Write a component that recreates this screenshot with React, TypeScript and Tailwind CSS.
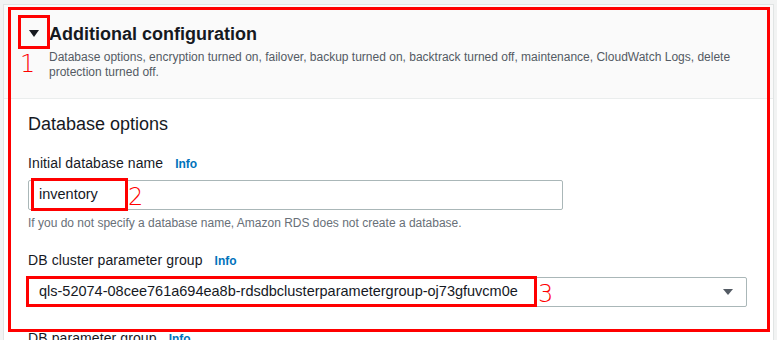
const font = { fontFamily: '"Liberation Sans", Arial, sans-serif' };

const Mark = ({ n, className }: { n: string; className: string }) => (
  <span
    className={`absolute text-[24px] leading-none font-extralight text-[#ff0000] ${className}`}
    style={{ fontFamily: '"DejaVu Sans", sans-serif' }}
  >
    {n}
  </span>
);

const Label = ({ text }: { text: string }) => (
  <div className="flex items-baseline gap-[12px]">
    <span className="text-[14px] leading-[20px] tracking-[0.1px] text-[#16191f]">{text}</span>
    <span className="text-[12px] font-bold text-[#0073bb]">Info</span>
  </div>
);

export default function App() {
  return (
    <div className="w-[777px] h-[340px] overflow-hidden bg-[#f2f3f3] pt-[4px] pl-[3px]" style={font}>
      <div className="relative w-[771px] h-[400px] bg-white border border-[#e1e4e4]">
        {/* header */}
        <div className="h-[94px] bg-[#fafafa] border-b border-[#eaeded] pt-[18px] pl-[25px]">
          <div className="flex items-center gap-[10px]">
            <svg width="10" height="7" viewBox="0 0 10 7" className="mt-[-1px]">
              <path d="M0 0 L10 0 L5 7 Z" fill="#16191f" />
            </svg>
            <h2 className="text-[18px] leading-[22px] font-bold text-[#16191f]">Additional configuration</h2>
          </div>
          <p className="mt-[5px] ml-[20px] w-[704px] text-[12px] leading-[15px] text-[#545b64]">
            Database options, encryption turned on, failover, backup turned on, backtrack turned off, maintenance,
            CloudWatch Logs, delete protection turned off.
          </p>
        </div>

        {/* body */}
        <div className="pl-[24px] pt-[14px]">
          <h3 className="text-[18px] leading-[22px] text-[#16191f]">Database options</h3>

          <div className="mt-[18px]">
            <Label text="Initial database name" />
          </div>
          <div className="mt-[7px] w-[535px] h-[30px] border border-[#aab7b8] rounded-[2px] flex items-center pl-[10px] text-[14.5px] text-[#16191f]">
            inventory
          </div>
          <p className="mt-[5px] text-[12px] leading-[16px] text-[#687078]">
            If you do not specify a database name, Amazon RDS does not create a database.
          </p>

          <div className="mt-[19px]">
            <Label text="DB cluster parameter group" />
          </div>
          <div className="mt-[7px] w-[719px] h-[30px] border border-[#aab7b8] rounded-[2px] flex items-center justify-between pl-[10px] pr-[13px] text-[14.5px] text-[#16191f]">
            <span>qls-52074-08cee761a694ea8b-rdsdbclusterparametergroup-oj73gfuvcm0e</span>
            <svg width="10" height="6" viewBox="0 0 10 6">
              <path d="M0 0 L10 0 L5 6 Z" fill="#545b64" />
            </svg>
          </div>

          <div className="mt-[21px]">
            <Label text="DB parameter group" />
          </div>
        </div>

        {/* annotations */}
        <div className="absolute left-[4px] top-[2px] w-[762px] h-[325px] border-[3px] border-[#ff0000]" />
        <div className="absolute left-[14px] top-[10px] w-[32px] h-[34px] border-[3px] border-[#ff0000]" />
        <Mark n="1" className="left-[16px] top-[47px]" />
        <div className="absolute left-[27px] top-[173px] w-[97px] h-[33px] border-[3px] border-[#ff0000]" />
        <Mark n="2" className="left-[124px] top-[180px]" />
        <div className="absolute left-[22px] top-[271px] w-[511px] h-[31px] border-[3px] border-[#ff0000]" />
        <Mark n="3" className="left-[534px] top-[277px]" />
      </div>
    </div>
  );
}
